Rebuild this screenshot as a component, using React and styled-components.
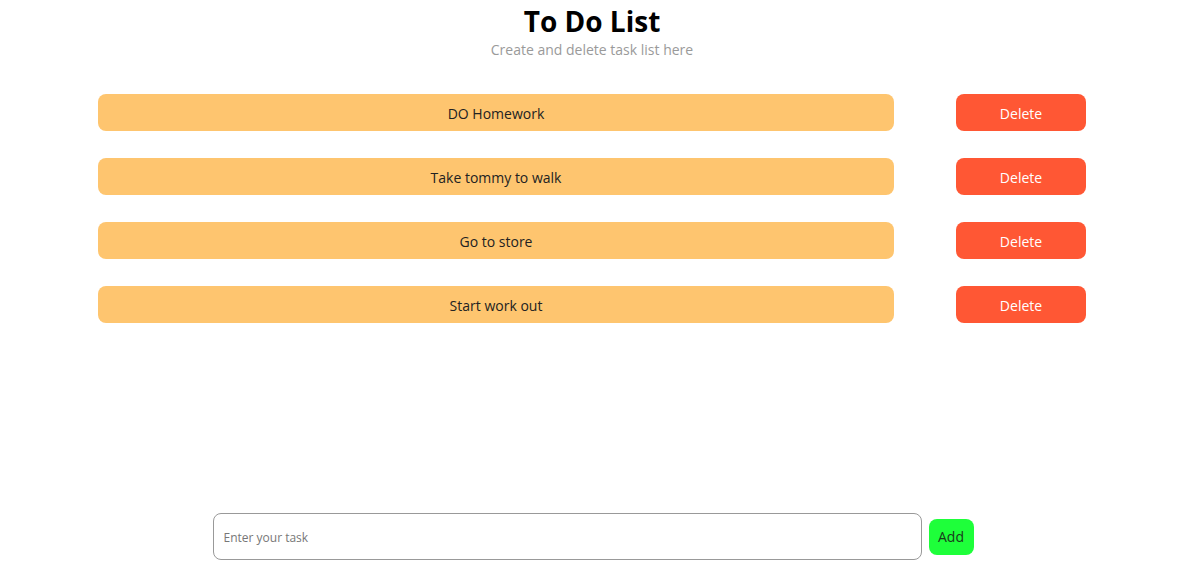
import React, { useState } from 'react'
import { styled, createGlobalStyle } from 'styled-components'

const GlobalStyle = createGlobalStyle`
  html, body {
    margin: 0;
    padding: 0;
    background: #fff;
    font-family: 'Open Sans', 'Noto Sans', sans-serif;
  }
`

const Page = styled.div`
  height: 100vh;
  display: flex;
  flex-direction: column;
  align-items: center;
  box-sizing: border-box;
  padding-bottom: 23px;
`

const Header = styled.header`
  text-align: center;
  padding-top: 4px;
  h1 {
    margin: 0;
    font-size: 28px;
    line-height: 34px;
    font-weight: 700;
    color: #000;
  }
  p {
    margin: 2px 0 0;
    font-size: 14px;
    line-height: 20px;
    color: #9a9a9a;
  }
`

const List = styled.ul`
  list-style: none;
  margin: 0;
  margin-top: 34px;
  padding: 0;
  width: 988px;
  display: flex;
  flex-direction: column;
  gap: 27px;
`

const Row = styled.li`
  display: flex;
  align-items: center;
  gap: 62px;
`

const Task = styled.div`
  flex: 1;
  height: 37px;
  box-sizing: border-box;
  padding-top: 1px;
  border-radius: 8px;
  background: #fec56f;
  display: flex;
  align-items: center;
  justify-content: center;
  font-size: 14px;
  color: #222;
`

const DeleteButton = styled.button`
  width: 130px;
  height: 37px;
  border: none;
  border-radius: 8px;
  background: #ff5734;
  color: #fff;
  font-family: inherit;
  font-size: 14px;
  padding: 1px 0 0;
  cursor: pointer;
`

const Composer = styled.form`
  margin-top: auto;
  margin-left: 2px;
  display: flex;
  align-items: center;
  gap: 7px;
`

const Input = styled.input`
  width: 709px;
  height: 47px;
  box-sizing: border-box;
  border: 1px solid #999;
  border-radius: 8px;
  padding: 2px 10px 0;
  font-family: inherit;
  font-size: 12px;
  outline: none;
  &::placeholder {
    color: #777;
  }
`

const AddButton = styled.button`
  width: 45px;
  height: 36px;
  border: none;
  border-radius: 8px;
  background: #1eff3a;
  color: #1a3a1a;
  font-family: inherit;
  font-size: 14px;
  padding: 0;
  cursor: pointer;
`

const initial = ['DO Homework', 'Take tommy to walk', 'Go to store', 'Start work out']

export default function App() {
  const [tasks, setTasks] = useState(initial)
  const [text, setText] = useState('')

  const add = (e) => {
    e.preventDefault()
    if (!text.trim()) return
    setTasks([...tasks, text.trim()])
    setText('')
  }

  return (
    <>
      <GlobalStyle />
      <Page>
        <Header>
          <h1>To Do List</h1>
          <p>Create and delete task list here</p>
        </Header>
        <List>
          {tasks.map((t, i) => (
            <Row key={i}>
              <Task>{t}</Task>
              <DeleteButton onClick={() => setTasks(tasks.filter((_, j) => j !== i))}>Delete</DeleteButton>
            </Row>
          ))}
        </List>
        <Composer onSubmit={add}>
          <Input placeholder="Enter your task" value={text} onChange={(e) => setText(e.target.value)} />
          <AddButton type="submit">Add</AddButton>
        </Composer>
      </Page>
    </>
  )
}
